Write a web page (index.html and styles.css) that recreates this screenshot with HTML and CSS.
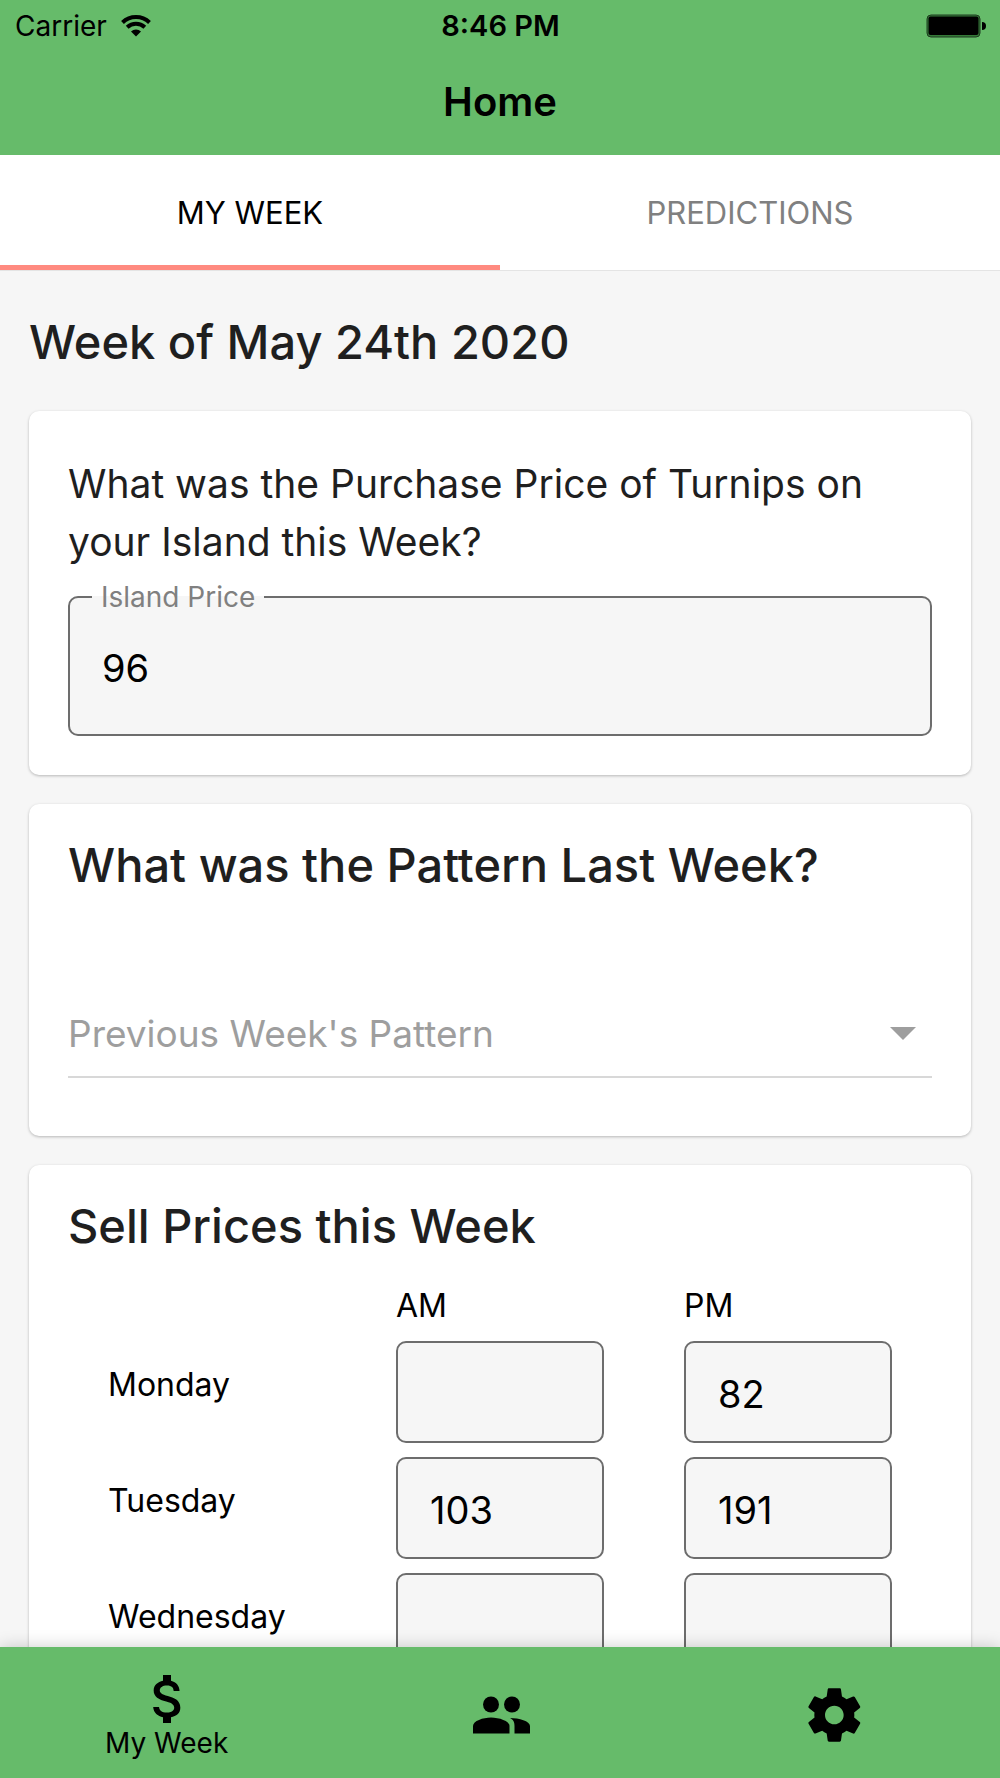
FILE: index.html
```html
<!DOCTYPE html>
<html lang="en">
<head>
  <meta charset="UTF-8">
  <meta name="viewport" content="width=device-width, initial-scale=1.0">
  <title>Home</title>
  <link rel="stylesheet" href="styles.css">
</head>
<body>
  <header class="header">
    <div class="status-bar">
      <div class="carrier">
        <span>Carrier</span>
        <svg class="wifi" viewBox="0 0 30 22" aria-hidden="true">
          <path d="M1.5 7.5a19.5 19.5 0 0 1 27 0M6.200 12.200a12.800 12.800 0 0 1 17.600 0" fill="none" stroke="#000" stroke-width="4"/>
          <path d="M15 21.500l-5-5a7.200 7.200 0 0 1 10 0z"/>
        </svg>
      </div>
      <span class="time">8:46 PM</span>
      <svg class="battery" viewBox="0 0 60 24" aria-hidden="true">
        <rect x="1" y="1" width="53" height="22" rx="4" fill="#357a38" stroke="#1f3a20" stroke-width="1"/>
        <rect x="2.500" y="2.500" width="50" height="18.500" rx="2"/>
        <path d="M56 8a4 4 0 0 1 0 8z"/>
      </svg>
    </div>
    <h1>Home</h1>
  </header>

  <nav class="tabs">
    <button class="tab active" type="button">MY WEEK</button>
    <button class="tab" type="button">PREDICTIONS</button>
  </nav>

  <main class="content">
    <h2 class="week-title">Week of May 24th 2020</h2>

    <section class="card price-card">
      <p>What was the Purchase Price of Turnips on your Island this Week?</p>
      <fieldset class="outlined">
        <legend><label for="island-price">Island Price</label></legend>
        <input type="text" inputmode="numeric" id="island-price" value="96">
      </fieldset>
    </section>

    <section class="card pattern-card">
      <h2>What was the Pattern Last Week?</h2>
      <div class="select">
        <select id="pattern" aria-label="Previous Week's Pattern">
          <option value="">Previous Week's Pattern</option>
        </select>
        <svg class="arrow" viewBox="0 0 26 13" aria-hidden="true"><path d="M0 0h26L13 13z"/></svg>
      </div>
    </section>

    <section class="card sell-card">
      <h2>Sell Prices this Week</h2>
      <table>
        <thead>
          <tr>
            <td></td>
            <th scope="col">AM</th>
            <th scope="col">PM</th>
          </tr>
        </thead>
        <tbody>
          <tr>
            <th scope="row">Monday</th>
            <td><input type="text" inputmode="numeric" aria-label="Monday AM"></td>
            <td><input type="text" inputmode="numeric" aria-label="Monday PM" value="82"></td>
          </tr>
          <tr>
            <th scope="row">Tuesday</th>
            <td><input type="text" inputmode="numeric" aria-label="Tuesday AM" value="103"></td>
            <td><input type="text" inputmode="numeric" aria-label="Tuesday PM" value="191"></td>
          </tr>
          <tr>
            <th scope="row">Wednesday</th>
            <td><input type="text" inputmode="numeric" aria-label="Wednesday AM"></td>
            <td><input type="text" inputmode="numeric" aria-label="Wednesday PM"></td>
          </tr>
        </tbody>
      </table>
    </section>
  </main>

  <nav class="bottom-nav">
    <a href="#week" class="with-label">
      <svg viewBox="-.5 0 24 24" aria-hidden="true"><path d="M11.800 10.900c-2.270-.59-3-1.200-3-2.150 0-1.090 1.010-1.850 2.700-1.850 1.780 0 2.440.85 2.500 2.100h2.210c-.07-1.720-1.120-3.300-3.210-3.810V3h-3v2.160c-1.940.42-3.500 1.680-3.500 3.610 0 2.310 1.910 3.460 4.700 4.130 2.500.6 3 1.480 3 2.410 0 .69-.49 1.790-2.700 1.790-2.060 0-2.870-.92-2.980-2.100h-2.200c.12 2.190 1.760 3.420 3.680 3.830V21h3v-2.150c1.950-.37 3.500-1.500 3.500-3.550 0-2.840-2.430-3.810-4.700-4.400z"/></svg>
      <span>My Week</span>
    </a>
    <a href="#friends" aria-label="Friends">
      <svg viewBox="0 0 64 64" aria-hidden="true">
        <circle cx="23" cy="21.500" r="8"/>
        <circle cx="44" cy="21.500" r="8"/>
        <path d="M5 50.500V43c0-5 10-8.500 18-8.500S41.500 38 41.500 43v7.500z"/>
        <path d="M42 35c9 0 20 3 20 8v7.500H46.500V43c0-4-1-6-4.500-8z"/>
      </svg>
    </a>
    <a href="#settings" aria-label="Settings">
      <svg viewBox="-.5 0 24 24" aria-hidden="true"><path d="M19.430 12.980c.04-.32.07-.64.07-.98s-.03-.66-.07-.98l2.110-1.650c.19-.15.24-.42.12-.64l-2-3.460c-.12-.22-.39-.3-.61-.22l-2.490 1c-.52-.4-1.080-.73-1.690-.98l-.38-2.650C14.460 2.180 14.250 2 14 2h-4c-.25 0-.46.18-.49.42l-.38 2.650c-.61.25-1.170.59-1.690.98l-2.490-1c-.23-.09-.49 0-.61.22l-2 3.460c-.13.22-.07.49.12.64l2.110 1.650c-.04.32-.07.65-.07.98s.03.66.07.98l-2.110 1.650c-.19.15-.24.42-.12.64l2 3.460c.12.22.39.3.61.22l2.490-1c.52.4 1.080.73 1.690.98l.38 2.650c.03.24.24.42.49.42h4c.25 0 .46-.18.49-.42l.38-2.650c.61-.25 1.170-.59 1.690-.98l2.490 1c.23.09.49 0 .61-.22l2-3.460c.12-.22.07-.49-.12-.64l-2.110-1.650zM12 15.500c-1.930 0-3.500-1.570-3.500-3.500s1.570-3.500 3.500-3.500 3.500 1.570 3.500 3.500-1.570 3.500-3.500 3.500z"/></svg>
    </a>
  </nav>
</body>
</html>
```
FILE: styles.css
```css
* {
  box-sizing: border-box;
}
body {
  margin: 0;
  height: 100vh;
  display: flex;
  flex-direction: column;
  background: #f6f6f6;
  color: #000;
  font-family: Inter, "Liberation Sans", sans-serif;
  font-size: 32px;
}
h1, h2, p {
  margin: 0;
}
h2 {
  color: #1f1f1f;
  font-size: 47px;
  font-weight: 500;
  line-height: 64px;
}
button, input, select {
  font-family: inherit;
}

/* header */
.header {
  flex: none;
  background: #66bb6a;
}
.status-bar {
  display: grid;
  grid-template-columns: 1fr auto 1fr;
  align-items: center;
  height: 51px;
  padding: 0 14px 0 15px;
  font-size: 28px;
}
.carrier {
  display: flex;
  align-items: center;
  gap: 14px;
}
.wifi {
  width: 30px;
  height: 22px;
}
.time {
  font-size: 29px;
  font-weight: 600;
}
.battery {
  width: 60px;
  height: 24px;
  justify-self: end;
}
h1 {
  font-size: 40px;
  font-weight: 600;
  line-height: 48px;
  padding: 27px 0 29px;
  text-align: center;
}

/* tabs */
.tabs {
  flex: none;
  display: flex;
  height: 116px;
  background: #fff;
  border-bottom: 1px solid #e4e4e4;
}
.tab {
  flex: 1;
  border: none;
  border-bottom: 5px solid transparent;
  padding: 5px 0 0;
  background: none;
  color: #808080;
  font-size: 31px;
  cursor: pointer;
}
.tab.active {
  color: #000;
  border-bottom-color: #ff8a80;
}

/* cards */
.content {
  flex: 1;
  min-height: 0;
  overflow-y: auto;
  scrollbar-width: none;
  padding: 0 29px;
}
.week-title {
  padding: 39px 0 37px;
}
.card {
  margin-bottom: 29px;
  padding: 29px 39px 39px;
  background: #fff;
  border-radius: 10px;
  box-shadow: 0 1px 3px rgba(0, 0, 0, 0.26);
}
.price-card {
  padding-top: 44px;
}
.price-card p {
  color: #1f1f1f;
  font-size: 39px;
  line-height: 58px;
}
.outlined {
  min-width: 0;
  margin: 8px 0 0;
  padding: 0 22px;
  border: 2px solid #6d6d6d;
  border-radius: 10px;
  background: #f6f6f6;
}
.outlined legend {
  padding: 0 9px;
  color: #808080;
  font-size: 28px;
  line-height: 36px;
}
.outlined input {
  width: 100%;
  height: 119px;
  padding: 0 10px 14px;
  border: none;
  outline: none;
  background: none;
  font-size: 38px;
}
.select {
  position: relative;
  margin-top: 93px;
  margin-bottom: 19px;
}
.select select {
  appearance: none;
  width: 100%;
  height: 88px;
  padding: 0;
  border: none;
  border-bottom: 2px solid #d8d8d8;
  background: none;
  color: #9e9e9e;
  font-size: 37px;
}
.arrow {
  position: absolute;
  top: 37px;
  right: 16px;
  width: 26px;
  height: 13px;
  fill: #9e9e9e;
  pointer-events: none;
}

/* sell prices */
table {
  width: 100%;
  table-layout: fixed;
  border-collapse: collapse;
}
th, td {
  padding: 0 40px;
  font-weight: 400;
  text-align: left;
}
thead th {
  padding-top: 24px;
  padding-bottom: 4px;
  line-height: 48px;
}
tbody th {
  padding-bottom: 16px;
}
tbody td {
  padding-top: 7px;
  padding-bottom: 7px;
}
td input {
  display: block;
  width: 100%;
  height: 102px;
  padding: 3px 32px 0;
  border: 2px solid #6d6d6d;
  border-radius: 10px;
  background: #f6f6f6;
  font-size: 38px;
}

/* bottom navigation */
.bottom-nav {
  flex: none;
  position: relative;
  display: flex;
  height: 131px;
  background: #66bb6a;
  box-shadow: 0 0 16px rgba(0, 0, 0, 0.2);
}
.bottom-nav a {
  flex: 1;
  display: flex;
  flex-direction: column;
  align-items: center;
  padding-top: 36px;
  color: #000;
  font-size: 28px;
  line-height: 24px;
  text-decoration: none;
}
.bottom-nav .with-label {
  padding-top: 20px;
}
.bottom-nav svg {
  width: 64px;
  height: 64px;
}
```
